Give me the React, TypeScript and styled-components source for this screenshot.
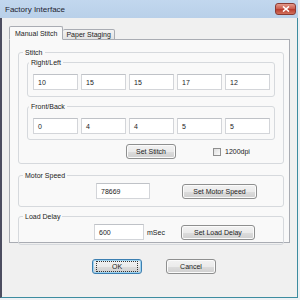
import React from "react";
import styled, { createGlobalStyle } from "styled-components";

const GlobalStyle = createGlobalStyle`
  html, body {
    margin: 0;
    padding: 0;
    background: #eef1f4;
  }
  body {
    font-family: "Liberation Sans", Arial, sans-serif;
    font-size: 7px;
    color: #1b1b1b;
  }
`;

const Window = styled.div`
  width: 298px;
  height: 298px;
  display: flex;
  flex-direction: column;
  box-sizing: border-box;
  background: #f0f0f0;
`;

const TitleBar = styled.div`
  height: 18px;
  flex: none;
  display: flex;
  align-items: center;
  justify-content: space-between;
  padding: 0 2px 0 5px;
  background: linear-gradient(#c2d7ee, #b9d0e9);
  font-size: 8px;
  color: #1e2430;
`;

const CloseButton = styled.div`
  width: 21px;
  height: 12px;
  margin-top: -1px;
  border: 1px solid #8a3a33;
  border-radius: 3px;
  box-sizing: border-box;
  background: linear-gradient(#e49a8c, #c9584a 50%, #b8392b 51%, #d0705c);
  display: flex;
  align-items: center;
  justify-content: center;
`;

const Body = styled.div`
  flex: 1;
  display: flex;
  flex-direction: column;
  border-left: 2px solid #4c4d60;
  border-right: 1px solid #3d8ca0;
  border-bottom: 1px solid #3d8ca0;
  padding: 8px 0 0 7px;
`;

const TabStrip = styled.div`
  display: flex;
  align-items: flex-end;
  height: 14px;
  position: relative;
  z-index: 1;
  margin-bottom: -1px;
`;

const Tab = styled.div<{ $active?: boolean }>`
  box-sizing: border-box;
  height: ${(p) => (p.$active ? "14px" : "11px")};
  padding: ${(p) => (p.$active ? "0 5px 0 5px" : "0 3px 0 3px")};
  display: flex;
  align-items: center;
  border: 1px solid #a9acb3;
  border-bottom: ${(p) => (p.$active ? "1px solid #f9f9f9" : "1px solid #a9acb3")};
  border-left: ${(p) => (p.$active ? "1px solid #a9acb3" : "none")};
  border-radius: 2px 2px 0 0;
  background: ${(p) => (p.$active ? "#f9f9f9" : "linear-gradient(#f3f3f3, #e3e3e3)")};
`;

const Panel = styled.div`
  width: 281px;
  height: 204px;
  box-sizing: border-box;
  border: 1px solid #a9acb3;
  background: #f9f9f9;
  padding: 8px 5px 2px 8px;
  display: flex;
  flex-direction: column;
`;

const Group = styled.fieldset<{ $pad?: string; $gap?: number }>`
  margin: ${(p) => p.$gap ?? 0}px 0 0 0;
  padding: ${(p) => p.$pad ?? "0 8px 4px 8px"};
  border: 1px solid #d6d9dd;
  border-radius: 3px;
  min-width: 0;
  display: flex;
  flex-direction: column;
`;

const Legend = styled.legend`
  padding: 0 2px;
  margin-left: -4px;
  font-size: 7px;
  line-height: 9px;
  color: #1b1b1b;
`;

const InputRow = styled.div`
  display: flex;
  gap: 3px;
`;

const Field = styled.div<{ $w?: number; $ml?: number }>`
  width: ${(p) => p.$w ?? 45}px;
  height: 16px;
  margin-left: ${(p) => p.$ml ?? 0}px;
  flex: none;
  box-sizing: border-box;
  background: #ffffff;
  border: 1px solid #d3d5d9;
  border-top-color: #bfc2c7;
  padding-left: 4px;
  display: flex;
  align-items: center;
`;

const Row = styled.div<{ $mt?: number }>`
  display: flex;
  align-items: center;
  margin-top: ${(p) => p.$mt ?? 0}px;
`;

const Button = styled.div<{ $w: number; $ml?: number; $default?: boolean }>`
  width: ${(p) => p.$w}px;
  height: 15px;
  margin-left: ${(p) => p.$ml ?? 0}px;
  flex: none;
  box-sizing: border-box;
  border: 1px solid ${(p) => (p.$default ? "#3c7fb1" : "#8e8f8f")};
  border-radius: 3px;
  background: linear-gradient(#f2f2f2, #ebebeb 50%, #dddddd 51%, #cfcfcf);
  box-shadow: inset 0 0 0 1px ${(p) => (p.$default ? "#9fd3f0" : "#fbfbfb")};
  display: flex;
  align-items: center;
  justify-content: center;
  color: #1b1b1b;
`;

const FocusText = styled.span`
  outline: 1px dotted #333;
  outline-offset: 1px;
  padding: 0 14px;
`;

const CheckBox = styled.div`
  width: 8px;
  height: 8px;
  box-sizing: border-box;
  border: 1px solid #8f8f8f;
  background: linear-gradient(135deg, #dedede, #fbfbfb);
  flex: none;
`;

const Label = styled.span<{ $ml?: number }>`
  margin-left: ${(p) => p.$ml ?? 0}px;
  white-space: nowrap;
`;

const Footer = styled.div`
  display: flex;
  margin-top: 16px;
`;

const rightLeft = ["10", "15", "15", "17", "12"];
const frontBack = ["0", "4", "4", "5", "5"];

export default function App() {
  return (
    <>
      <GlobalStyle />
      <Window>
        <TitleBar>
          <span>Factory Interface</span>
          <CloseButton>
            <svg width="8" height="6" viewBox="0 0 8 6">
              <path d="M1 0.5 L7 5.5 M7 0.5 L1 5.5" stroke="#fff" strokeWidth="1.6" />
            </svg>
          </CloseButton>
        </TitleBar>
        <Body>
          <TabStrip>
            <Tab $active>Manual Stitch</Tab>
            <Tab>Paper Staging</Tab>
          </TabStrip>
          <Panel>
            <Group $pad="1px 8px 4px 8px">
              <Legend>Stitch</Legend>
              <Group $pad="7px 5px 6px 5px">
                <Legend>Right/Left</Legend>
                <InputRow>
                  {rightLeft.map((v, i) => (
                    <Field key={i}>{v}</Field>
                  ))}
                </InputRow>
              </Group>
              <Group $pad="7px 5px 5px 5px" $gap={5}>
                <Legend>Front/Back</Legend>
                <InputRow>
                  {frontBack.map((v, i) => (
                    <Field key={i}>{v}</Field>
                  ))}
                </InputRow>
              </Group>
              <Row $mt={4}>
                <Button $w={50} $ml={99}>Set Stitch</Button>
                <CheckBox style={{ marginLeft: 37 }} />
                <Label $ml={4}>1200dpi</Label>
              </Row>
            </Group>
            <Group $pad="3px 8px 7px 8px" $gap={7}>
              <Legend>Motor Speed</Legend>
              <Row>
                <Field $w={54} $ml={69}>78669</Field>
                <Button $w={75} $ml={32}>Set Motor Speed</Button>
              </Row>
            </Group>
            <Group $pad="3px 8px 4px 8px" $gap={5}>
              <Legend>Load Delay</Legend>
              <Row>
                <Field $w={50} $ml={67}>600</Field>
                <Label $ml={3}>mSec</Label>
                <Button $w={74} $ml={16}>Set Load Delay</Button>
              </Row>
            </Group>
          </Panel>
          <Footer>
            <Button $w={50} $ml={83} $default>
              <FocusText>OK</FocusText>
            </Button>
            <Button $w={50} $ml={24}>Cancel</Button>
          </Footer>
        </Body>
      </Window>
    </>
  );
}
